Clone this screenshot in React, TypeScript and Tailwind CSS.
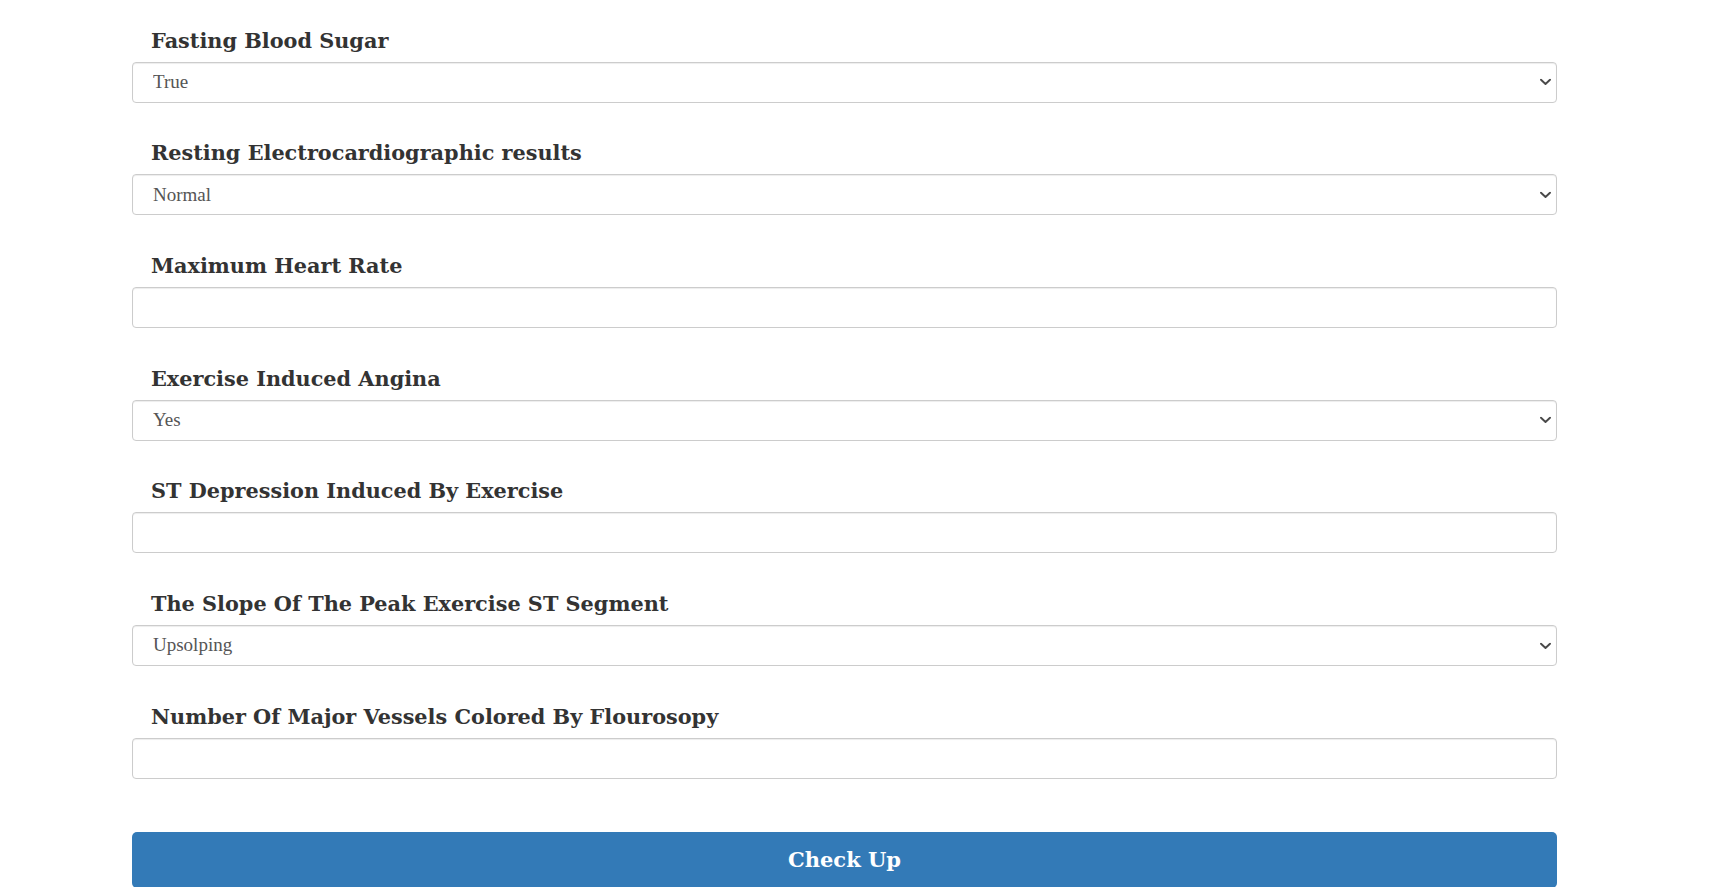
import React from "react";

type Field = { label: string; type: "select" | "input"; value?: string };

const fields: Field[] = [
  { label: "Fasting Blood Sugar", type: "select", value: "True" },
  { label: "Resting Electrocardiographic results", type: "select", value: "Normal" },
  { label: "Maximum Heart Rate", type: "input" },
  { label: "Exercise Induced Angina", type: "select", value: "Yes" },
  { label: "ST Depression Induced By Exercise", type: "input" },
  { label: "The Slope Of The Peak Exercise ST Segment", type: "select", value: "Upsolping" },
  { label: "Number Of Major Vessels Colored By Flourosopy", type: "input" },
];

function Chevron() {
  return (
    <svg
      className="pointer-events-none absolute right-[6px] top-1/2 -translate-y-1/2"
      width="11"
      height="7"
      viewBox="0 0 11 7"
      fill="none"
    >
      <path d="M1 1.2 L5.5 5.5 L10 1.2" stroke="#4a4a4a" strokeWidth="1.9" strokeLinecap="round" strokeLinejoin="round" />
    </svg>
  );
}

export default function App() {
  return (
    <div className="min-h-screen bg-white">
      <div className="ml-[132px] w-[1425px] pt-[28.6px] pb-[40px]">
        <div className="flex flex-col gap-[38.7px]">
          {fields.map((f) => (
            <div key={f.label} className="flex flex-col">
              <label className="mb-[9px] block pl-[19px] text-[20.8px] leading-[24px] font-bold text-[#333] [font-family:'DejaVu_Serif',serif]">
                {f.label}
              </label>
              {f.type === "select" ? (
                <div className="relative">
                  <select
                    defaultValue={f.value}
                    className="block h-[41px] w-full appearance-none rounded-[4px] border border-[#ccc] bg-white pl-[20px] pr-[24px] text-[19px] text-[#555] shadow-[inset_0_1px_1px_rgba(0,0,0,0.075)] outline-none [font-family:'Liberation_Serif',serif]"
                  >
                    <option>{f.value}</option>
                  </select>
                  <Chevron />
                </div>
              ) : (
                <input
                  type="text"
                  className="block h-[41px] w-full rounded-[4px] border border-[#ccc] bg-white px-[20px] text-[19px] text-[#555] shadow-[inset_0_1px_1px_rgba(0,0,0,0.075)] outline-none [font-family:'Liberation_Serif',serif]"
                />
              )}
            </div>
          ))}
        </div>
        <button className="mt-[52.8px] flex h-[56px] w-full items-center justify-center rounded-[5px] bg-[#337ab7] text-[21px] leading-[24px] font-bold text-white [font-family:'DejaVu_Serif',serif]">
          Check Up
        </button>
      </div>
    </div>
  );
}
